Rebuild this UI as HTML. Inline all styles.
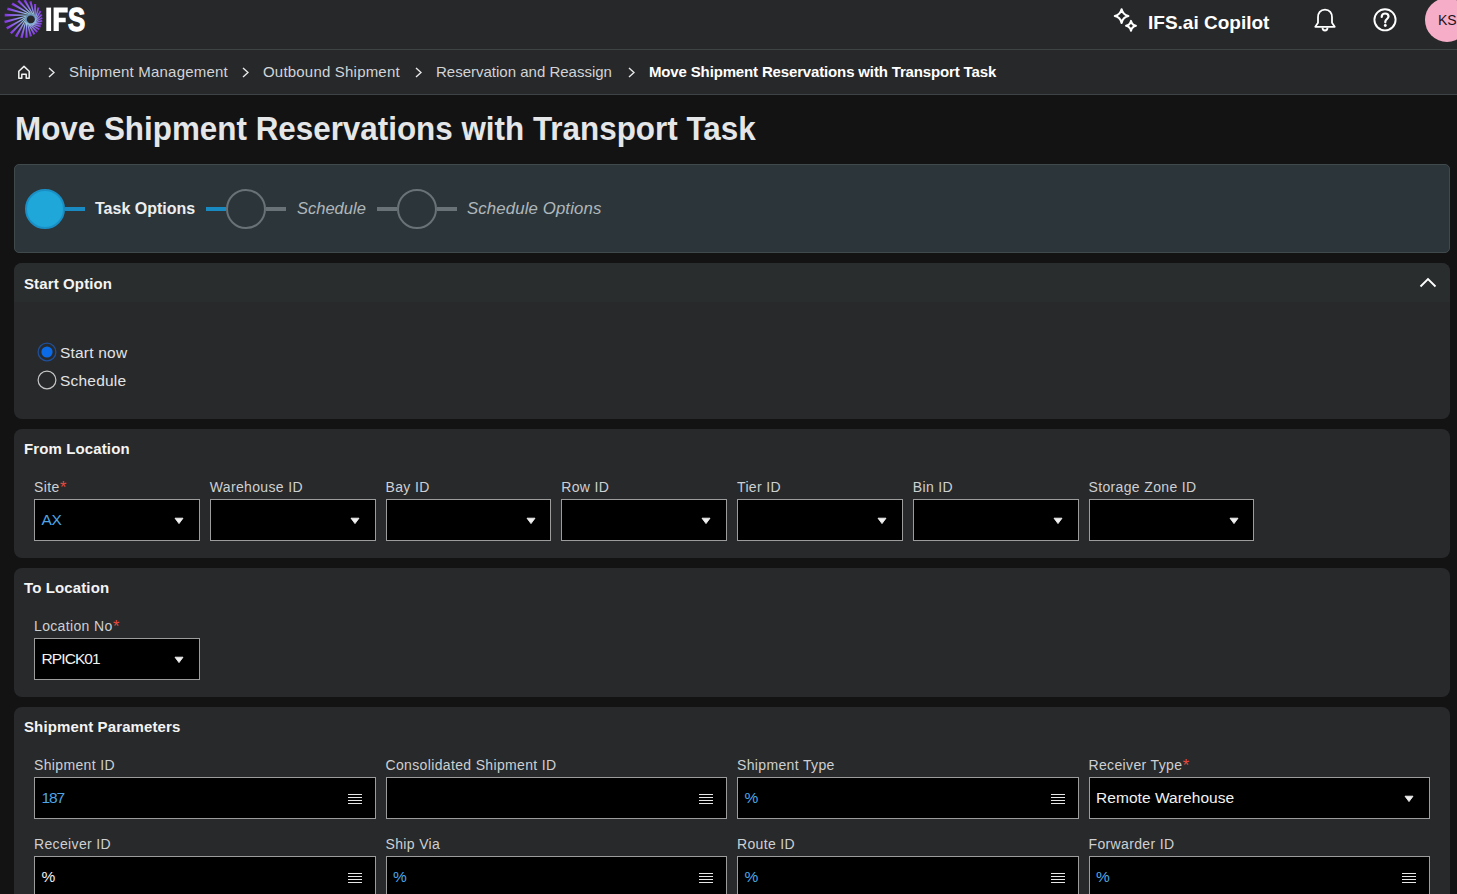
<!DOCTYPE html>
<html><head><meta charset="utf-8">
<style>
*{box-sizing:border-box;margin:0;padding:0}
html,body{width:1457px;height:894px;overflow:hidden;background:#131314;font-family:"Liberation Sans",sans-serif}
.a{position:absolute;white-space:nowrap}
#hdr{position:absolute;left:0;top:0;width:1457px;height:50px;background:#27282a;border-bottom:1px solid #3e4346}
#bc{position:absolute;left:0;top:50px;width:1457px;height:45px;background:#27282a;border-bottom:1px solid #3e4346}
.bct{font-size:15px;line-height:15px;color:#d2d4d6}
.chev{position:absolute;width:7px;height:11px}
#title{left:15px;top:112px;font-size:33px;line-height:33px;font-weight:700;color:#e4e6e8;transform:scaleX(0.951);transform-origin:0 0}
#step{position:absolute;left:14px;top:164px;width:1436px;height:89px;background:#2c363a;border:1px solid #404a4d;border-radius:5px}
.card{position:absolute;left:14px;width:1436px;background:#28292b;border-radius:8px}
.ct{font-size:15px;line-height:15px;font-weight:700;color:#f4f4f4;letter-spacing:0.12px}
.lbl{font-size:14px;line-height:14px;color:#cdd0d2;letter-spacing:0.35px}
.req{color:#e64a3f;font-size:16.5px;line-height:1px;position:relative;top:1px;margin-left:0.5px}
.inp{position:absolute;height:42px;background:#000;border:1px solid #9c9c9c}
.val{position:absolute;left:6.5px;top:11.5px;font-size:15.5px;line-height:15px;color:#4ea6e6;white-space:nowrap}
.val.w{color:#f2f2f2}
.dd{position:absolute;right:14.7px;top:17px}
.lst{position:absolute;right:13px;top:16px;width:14px;height:10px}
.lst i{display:block;height:1px;background:#e6e6e6;margin-bottom:2px}
</style></head><body>

<div id="hdr"></div>
<!-- logo -->
<svg class="a" style="left:0;top:0" width="46" height="40" viewBox="0 0 46 40" id="logo"><defs><linearGradient id="g0" gradientUnits="userSpaceOnUse" x1="35.1" y1="19.4" x2="35.1" y2="4.1"><stop offset="0" stop-color="#4a6fa8"/><stop offset="0.2" stop-color="#9fd2ec"/><stop offset="0.55" stop-color="#8c78e6"/><stop offset="1" stop-color="#8434e0"/></linearGradient><linearGradient id="g1" gradientUnits="userSpaceOnUse" x1="35.0" y1="20.5" x2="38.4" y2="7.5"><stop offset="0" stop-color="#4a6fa8"/><stop offset="0.2" stop-color="#9fd2ec"/><stop offset="0.55" stop-color="#8c78e6"/><stop offset="1" stop-color="#8434e0"/></linearGradient><linearGradient id="g2" gradientUnits="userSpaceOnUse" x1="34.5" y1="21.5" x2="40.6" y2="11.1"><stop offset="0" stop-color="#4a6fa8"/><stop offset="0.2" stop-color="#9fd2ec"/><stop offset="0.55" stop-color="#8c78e6"/><stop offset="1" stop-color="#8434e0"/></linearGradient><linearGradient id="g3" gradientUnits="userSpaceOnUse" x1="33.8" y1="22.4" x2="41.8" y2="14.5"><stop offset="0" stop-color="#4a6fa8"/><stop offset="0.2" stop-color="#9fd2ec"/><stop offset="0.55" stop-color="#8c78e6"/><stop offset="1" stop-color="#8434e0"/></linearGradient><linearGradient id="g4" gradientUnits="userSpaceOnUse" x1="33.0" y1="23.1" x2="42.3" y2="17.7"><stop offset="0" stop-color="#4a6fa8"/><stop offset="0.2" stop-color="#9fd2ec"/><stop offset="0.55" stop-color="#8c78e6"/><stop offset="1" stop-color="#8434e0"/></linearGradient><linearGradient id="g5" gradientUnits="userSpaceOnUse" x1="31.9" y1="23.6" x2="42.2" y2="20.8"><stop offset="0" stop-color="#4a6fa8"/><stop offset="0.2" stop-color="#9fd2ec"/><stop offset="0.55" stop-color="#8c78e6"/><stop offset="1" stop-color="#8434e0"/></linearGradient><linearGradient id="g6" gradientUnits="userSpaceOnUse" x1="30.8" y1="23.7" x2="41.7" y2="23.7"><stop offset="0" stop-color="#4a6fa8"/><stop offset="0.2" stop-color="#9fd2ec"/><stop offset="0.55" stop-color="#8c78e6"/><stop offset="1" stop-color="#8434e0"/></linearGradient><linearGradient id="g7" gradientUnits="userSpaceOnUse" x1="29.7" y1="23.6" x2="40.7" y2="26.5"><stop offset="0" stop-color="#4a6fa8"/><stop offset="0.2" stop-color="#9fd2ec"/><stop offset="0.55" stop-color="#8c78e6"/><stop offset="1" stop-color="#8434e0"/></linearGradient><linearGradient id="g8" gradientUnits="userSpaceOnUse" x1="28.7" y1="23.1" x2="39.3" y2="29.3"><stop offset="0" stop-color="#4a6fa8"/><stop offset="0.2" stop-color="#9fd2ec"/><stop offset="0.55" stop-color="#8c78e6"/><stop offset="1" stop-color="#8434e0"/></linearGradient><linearGradient id="g9" gradientUnits="userSpaceOnUse" x1="27.8" y1="22.4" x2="37.2" y2="31.9"><stop offset="0" stop-color="#4a6fa8"/><stop offset="0.2" stop-color="#9fd2ec"/><stop offset="0.55" stop-color="#8c78e6"/><stop offset="1" stop-color="#8434e0"/></linearGradient><linearGradient id="g10" gradientUnits="userSpaceOnUse" x1="27.1" y1="21.5" x2="34.5" y2="34.4"><stop offset="0" stop-color="#4a6fa8"/><stop offset="0.2" stop-color="#9fd2ec"/><stop offset="0.55" stop-color="#8c78e6"/><stop offset="1" stop-color="#8434e0"/></linearGradient><linearGradient id="g11" gradientUnits="userSpaceOnUse" x1="26.6" y1="20.5" x2="30.9" y2="36.4"><stop offset="0" stop-color="#4a6fa8"/><stop offset="0.2" stop-color="#9fd2ec"/><stop offset="0.55" stop-color="#8c78e6"/><stop offset="1" stop-color="#8434e0"/></linearGradient><linearGradient id="g12" gradientUnits="userSpaceOnUse" x1="26.5" y1="19.4" x2="26.5" y2="37.7"><stop offset="0" stop-color="#4a6fa8"/><stop offset="0.2" stop-color="#9fd2ec"/><stop offset="0.55" stop-color="#8c78e6"/><stop offset="1" stop-color="#8434e0"/></linearGradient><linearGradient id="g13" gradientUnits="userSpaceOnUse" x1="26.6" y1="18.3" x2="21.4" y2="37.9"><stop offset="0" stop-color="#4a6fa8"/><stop offset="0.2" stop-color="#9fd2ec"/><stop offset="0.55" stop-color="#8c78e6"/><stop offset="1" stop-color="#8434e0"/></linearGradient><linearGradient id="g14" gradientUnits="userSpaceOnUse" x1="27.1" y1="17.2" x2="16.0" y2="36.5"><stop offset="0" stop-color="#4a6fa8"/><stop offset="0.2" stop-color="#9fd2ec"/><stop offset="0.55" stop-color="#8c78e6"/><stop offset="1" stop-color="#8434e0"/></linearGradient><linearGradient id="g15" gradientUnits="userSpaceOnUse" x1="27.8" y1="16.4" x2="10.8" y2="33.3"><stop offset="0" stop-color="#4a6fa8"/><stop offset="0.2" stop-color="#9fd2ec"/><stop offset="0.55" stop-color="#8c78e6"/><stop offset="1" stop-color="#8434e0"/></linearGradient><linearGradient id="g16" gradientUnits="userSpaceOnUse" x1="28.6" y1="15.7" x2="6.7" y2="28.3"><stop offset="0" stop-color="#4a6fa8"/><stop offset="0.2" stop-color="#9fd2ec"/><stop offset="0.55" stop-color="#8c78e6"/><stop offset="1" stop-color="#8434e0"/></linearGradient><linearGradient id="g17" gradientUnits="userSpaceOnUse" x1="29.7" y1="15.2" x2="4.5" y2="22.0"><stop offset="0" stop-color="#4a6fa8"/><stop offset="0.2" stop-color="#9fd2ec"/><stop offset="0.55" stop-color="#8c78e6"/><stop offset="1" stop-color="#8434e0"/></linearGradient><linearGradient id="g18" gradientUnits="userSpaceOnUse" x1="30.8" y1="15.1" x2="4.7" y2="15.1"><stop offset="0" stop-color="#4a6fa8"/><stop offset="0.2" stop-color="#9fd2ec"/><stop offset="0.55" stop-color="#8c78e6"/><stop offset="1" stop-color="#8434e0"/></linearGradient><linearGradient id="g19" gradientUnits="userSpaceOnUse" x1="31.9" y1="15.2" x2="7.4" y2="8.7"><stop offset="0" stop-color="#4a6fa8"/><stop offset="0.2" stop-color="#9fd2ec"/><stop offset="0.55" stop-color="#8c78e6"/><stop offset="1" stop-color="#8434e0"/></linearGradient><linearGradient id="g20" gradientUnits="userSpaceOnUse" x1="33.0" y1="15.7" x2="12.1" y2="3.6"><stop offset="0" stop-color="#4a6fa8"/><stop offset="0.2" stop-color="#9fd2ec"/><stop offset="0.55" stop-color="#8c78e6"/><stop offset="1" stop-color="#8434e0"/></linearGradient><linearGradient id="g21" gradientUnits="userSpaceOnUse" x1="33.8" y1="16.4" x2="18.2" y2="0.7"><stop offset="0" stop-color="#4a6fa8"/><stop offset="0.2" stop-color="#9fd2ec"/><stop offset="0.55" stop-color="#8c78e6"/><stop offset="1" stop-color="#8434e0"/></linearGradient><linearGradient id="g22" gradientUnits="userSpaceOnUse" x1="34.5" y1="17.2" x2="24.6" y2="0.0"><stop offset="0" stop-color="#4a6fa8"/><stop offset="0.2" stop-color="#9fd2ec"/><stop offset="0.55" stop-color="#8c78e6"/><stop offset="1" stop-color="#8434e0"/></linearGradient><linearGradient id="g23" gradientUnits="userSpaceOnUse" x1="35.0" y1="18.3" x2="30.4" y2="1.4"><stop offset="0" stop-color="#4a6fa8"/><stop offset="0.2" stop-color="#9fd2ec"/><stop offset="0.55" stop-color="#8c78e6"/><stop offset="1" stop-color="#8434e0"/></linearGradient></defs><polygon fill="url(#g0)" points="35.3,20.4 36.2,4.1 34.0,4.1 34.9,20.4"/><polygon fill="url(#g1)" points="34.9,21.5 39.5,7.8 37.4,7.2 34.5,21.4"/><polygon fill="url(#g2)" points="34.2,22.5 41.5,11.6 39.7,10.6 33.8,22.3"/><polygon fill="url(#g3)" points="33.3,23.3 42.5,15.2 41.1,13.8 33.0,23.0"/><polygon fill="url(#g4)" points="32.2,23.8 42.8,18.6 41.8,16.9 32.0,23.4"/><polygon fill="url(#g5)" points="31.0,24.0 42.5,21.7 42.0,19.8 30.9,23.6"/><polygon fill="url(#g6)" points="29.8,23.9 41.7,24.7 41.7,22.7 29.8,23.5"/><polygon fill="url(#g7)" points="28.7,23.5 40.5,27.5 41.0,25.5 28.8,23.1"/><polygon fill="url(#g8)" points="27.7,22.8 38.8,30.2 39.8,28.4 27.9,22.4"/><polygon fill="url(#g9)" points="26.9,21.9 36.5,32.7 38.0,31.2 27.2,21.6"/><polygon fill="url(#g10)" points="26.4,20.8 33.5,34.9 35.4,33.8 26.8,20.6"/><polygon fill="url(#g11)" points="26.2,19.6 29.8,36.7 32.0,36.1 26.6,19.5"/><polygon fill="url(#g12)" points="26.3,18.4 25.3,37.7 27.7,37.7 26.7,18.4"/><polygon fill="url(#g13)" points="26.7,17.3 20.2,37.6 22.6,38.2 27.1,17.4"/><polygon fill="url(#g14)" points="27.4,16.3 14.8,35.9 17.1,37.2 27.8,16.5"/><polygon fill="url(#g15)" points="28.3,15.5 9.9,32.4 11.7,34.2 28.6,15.8"/><polygon fill="url(#g16)" points="29.4,15.0 6.1,27.2 7.4,29.5 29.6,15.4"/><polygon fill="url(#g17)" points="30.6,14.8 4.2,20.7 4.9,23.3 30.7,15.2"/><polygon fill="url(#g18)" points="31.8,14.9 4.7,13.7 4.7,16.5 31.8,15.3"/><polygon fill="url(#g19)" points="32.9,15.3 7.7,7.4 7.0,10.0 32.8,15.7"/><polygon fill="url(#g20)" points="33.9,16.0 12.8,2.5 11.4,4.8 33.7,16.4"/><polygon fill="url(#g21)" points="34.7,16.9 19.1,-0.2 17.3,1.6 34.4,17.2"/><polygon fill="url(#g22)" points="35.2,18.0 25.6,-0.6 23.5,0.7 34.8,18.2"/><polygon fill="url(#g23)" points="35.4,19.2 31.5,1.1 29.3,1.7 35.0,19.3"/></svg>
<svg class="a" style="left:40px;top:0" width="50" height="40" viewBox="40 0 50 40">
  <rect x="46.3" y="7.6" width="4.8" height="23.4" fill="#fff"/>
  <path d="M53.6 7.6 H67.7 V12.6 H58.8 V17.7 H65.7 V22.2 H58.8 V31 H53.6 Z" fill="#fff"/>
</svg>
<div class="a" style="left:67.6px;top:3px;font-size:33px;line-height:33px;font-weight:700;color:#fff;-webkit-text-stroke:1.3px #fff;transform:scaleX(0.78);transform-origin:0 0">S</div>

<!-- copilot -->
<svg class="a" style="left:1112px;top:7px" width="27" height="26" viewBox="0 0 27 26">
  <path d="M9.6 2.3 Q10.9 7.8 16.4 9.1 Q10.9 10.4 9.6 15.899999999999999 Q8.299999999999999 10.4 2.8 9.1 Q8.299999999999999 7.8 9.6 2.3Z" fill="none" stroke="#fff" stroke-width="2.1" stroke-linejoin="round"/>
  <path d="M19 13.9 Q19.95 17.85 23.9 18.8 Q19.95 19.75 19 23.700000000000003 Q18.05 19.75 14.1 18.8 Q18.05 17.85 19 13.9Z" fill="none" stroke="#fff" stroke-width="2.1" stroke-linejoin="round"/>
</svg>
<div class="a" style="left:1148px;top:13px;font-size:19px;line-height:20px;font-weight:700;color:#fff">IFS.ai Copilot</div>
<!-- bell -->
<svg class="a" style="left:1312px;top:7px" width="26" height="26" viewBox="0 0 26 26">
  <path d="M13 2.6 C8.3 2.6 6 6 6 10.2 L6 15.8 L3.3 19.8 L22.7 19.8 L20 15.8 L20 10.2 C20 6 17.7 2.6 13 2.6Z" fill="none" stroke="#fff" stroke-width="1.8" stroke-linejoin="round"/>
  <path d="M10.5 20.5 C10.5 22.5 11.5 23.5 13 23.5 C14.5 23.5 15.5 22.5 15.5 20.5" fill="none" stroke="#fff" stroke-width="1.8"/>
</svg>
<!-- help -->
<svg class="a" style="left:1372px;top:7px" width="26" height="26" viewBox="0 0 26 26">
  <circle cx="13" cy="12.8" r="10.6" fill="none" stroke="#fff" stroke-width="1.9"/>
  <path d="M9.7 9.9 C9.7 7.7 11.3 6.5 13.1 6.5 C15 6.5 16.5 7.8 16.5 9.6 C16.5 11.7 13.3 12.3 13.3 14.7 L13.3 15.3" fill="none" stroke="#fff" stroke-width="2.2" stroke-linecap="round"/>
  <circle cx="13.3" cy="18.5" r="1.45" fill="#fff"/>
</svg>
<!-- avatar -->
<div class="a" style="left:1425px;top:-2px;width:44px;height:44px;border-radius:50%;background:#f6aec8"></div>
<div class="a" style="left:1438px;top:13px;font-size:14px;line-height:14px;color:#1a1422">KS</div>

<div id="bc"></div>
<svg class="a" style="left:16px;top:64px" width="16" height="16" viewBox="0 0 16 16">
  <path d="M2.8 14.2 L2.8 7.2 L8 2.4 L13.2 7.2 L13.2 14.2 L10.2 14.2 L10.2 10.2 L5.8 10.2 L5.8 14.2 Z" fill="none" stroke="#f2f2f2" stroke-width="1.5" stroke-linejoin="round"/>
</svg>
<svg class="chev" style="left:48px;top:67px" viewBox="0 0 7 11"><path d="M1 1 L6 5.5 L1 10" fill="none" stroke="#e8e8e8" stroke-width="1.4"/></svg>
<div class="a bct" style="left:69px;top:64px;letter-spacing:0.2px">Shipment Management</div>
<svg class="chev" style="left:242px;top:67px" viewBox="0 0 7 11"><path d="M1 1 L6 5.5 L1 10" fill="none" stroke="#e8e8e8" stroke-width="1.4"/></svg>
<div class="a bct" style="left:263px;top:64px;letter-spacing:0.2px">Outbound Shipment</div>
<svg class="chev" style="left:415px;top:67px" viewBox="0 0 7 11"><path d="M1 1 L6 5.5 L1 10" fill="none" stroke="#e8e8e8" stroke-width="1.4"/></svg>
<div class="a bct" style="left:436px;top:64px">Reservation and Reassign</div>
<svg class="chev" style="left:628px;top:67px" viewBox="0 0 7 11"><path d="M1 1 L6 5.5 L1 10" fill="none" stroke="#e8e8e8" stroke-width="1.4"/></svg>
<div class="a bct" style="left:649px;top:64px;font-weight:700;color:#fff;letter-spacing:-0.15px">Move Shipment Reservations with Transport Task</div>

<div class="a" id="title">Move Shipment Reservations with Transport Task</div>

<!-- stepper -->
<div id="step"></div>
<div class="a" style="left:25px;top:189px;width:40px;height:40px;border-radius:50%;background:#1fa7d9;border:2px solid #1a8fc6"></div>
<div class="a" style="left:65px;top:207px;width:20px;height:4px;background:#1a8ac2"></div>
<div class="a" style="left:95px;top:201px;font-size:16px;line-height:16px;font-weight:700;color:#eceeef">Task Options</div>
<div class="a" style="left:206px;top:207px;width:20px;height:4px;background:#1a8ac2"></div>
<div class="a" style="left:226px;top:189px;width:40px;height:40px;border-radius:50%;border:2px solid #687277"></div>
<div class="a" style="left:266px;top:207px;width:20px;height:4px;background:#687277"></div>
<div class="a" style="left:297px;top:200px;font-size:16.5px;line-height:16px;font-style:italic;color:#b0b7bb">Schedule</div>
<div class="a" style="left:377px;top:207px;width:20px;height:4px;background:#687277"></div>
<div class="a" style="left:397px;top:189px;width:40px;height:40px;border-radius:50%;border:2px solid #687277"></div>
<div class="a" style="left:437px;top:207px;width:20px;height:4px;background:#687277"></div>
<div class="a" style="left:467px;top:201px;font-size:16.8px;line-height:16px;font-style:italic;color:#b0b7bb;letter-spacing:0.12px">Schedule Options</div>

<!-- Start Option card -->
<div class="card" style="top:263px;height:156px;overflow:hidden">
  <div style="position:absolute;left:0;top:0;width:100%;height:39px;background:#2a2d2e"></div>
</div>
<div class="a ct" style="left:24px;top:276px">Start Option</div>
<svg class="a" style="left:1419px;top:276px" width="18" height="12" viewBox="0 0 18 12"><path d="M1.5 10.5 L9 3 L16.5 10.5" fill="none" stroke="#fff" stroke-width="1.8"/></svg>
<svg class="a" style="left:36px;top:341px" width="22" height="22" viewBox="0 0 22 22">
  <circle cx="11" cy="11" r="8.9" fill="none" stroke="#1f4f98" stroke-width="1.3"/>
  <circle cx="11" cy="11" r="5.6" fill="#0b6be6"/>
</svg>
<div class="a" style="left:60px;top:345px;font-size:15.5px;line-height:15px;color:#e2e4e6;letter-spacing:0.2px">Start now</div>
<svg class="a" style="left:36px;top:369px" width="22" height="22" viewBox="0 0 22 22">
  <circle cx="11" cy="11" r="8.9" fill="none" stroke="#c6c6c6" stroke-width="1.2"/>
</svg>
<div class="a" style="left:60px;top:373px;font-size:15.5px;line-height:15px;color:#e2e4e6;letter-spacing:0.2px">Schedule</div>

<!-- From Location -->
<div class="card" style="top:429px;height:129px"></div>
<div class="a ct" style="left:24px;top:441px">From Location</div>
<!-- To Location -->
<div class="card" style="top:568px;height:129px"></div>
<div class="a ct" style="left:24px;top:580px">To Location</div>

<!-- Shipment Parameters -->
<div class="card" style="top:707px;height:200px"></div>
<div class="a ct" style="left:24px;top:719px">Shipment Parameters</div>

<!-- from fields -->
<div class="a lbl" style="left:34.00px;top:480px">Site<span class="req">*</span></div>
<div class="inp" style="left:34.00px;top:499px;width:165.75px"><div class="val" style="letter-spacing:-0.3px">AX</div><svg class="dd" width="10" height="8" viewBox="0 0 10 8"><path d="M1 1.2 H9 L5 6.6Z" fill="#f0f0f0" stroke="#f0f0f0" stroke-width="0.9" stroke-linejoin="round"/></svg></div>
<div class="a lbl" style="left:209.75px;top:480px">Warehouse ID</div>
<div class="inp" style="left:209.75px;top:499px;width:165.75px"><svg class="dd" width="10" height="8" viewBox="0 0 10 8"><path d="M1 1.2 H9 L5 6.6Z" fill="#f0f0f0" stroke="#f0f0f0" stroke-width="0.9" stroke-linejoin="round"/></svg></div>
<div class="a lbl" style="left:385.50px;top:480px">Bay ID</div>
<div class="inp" style="left:385.50px;top:499px;width:165.75px"><svg class="dd" width="10" height="8" viewBox="0 0 10 8"><path d="M1 1.2 H9 L5 6.6Z" fill="#f0f0f0" stroke="#f0f0f0" stroke-width="0.9" stroke-linejoin="round"/></svg></div>
<div class="a lbl" style="left:561.25px;top:480px">Row ID</div>
<div class="inp" style="left:561.25px;top:499px;width:165.75px"><svg class="dd" width="10" height="8" viewBox="0 0 10 8"><path d="M1 1.2 H9 L5 6.6Z" fill="#f0f0f0" stroke="#f0f0f0" stroke-width="0.9" stroke-linejoin="round"/></svg></div>
<div class="a lbl" style="left:737.00px;top:480px">Tier ID</div>
<div class="inp" style="left:737.00px;top:499px;width:165.75px"><svg class="dd" width="10" height="8" viewBox="0 0 10 8"><path d="M1 1.2 H9 L5 6.6Z" fill="#f0f0f0" stroke="#f0f0f0" stroke-width="0.9" stroke-linejoin="round"/></svg></div>
<div class="a lbl" style="left:912.75px;top:480px">Bin ID</div>
<div class="inp" style="left:912.75px;top:499px;width:165.75px"><svg class="dd" width="10" height="8" viewBox="0 0 10 8"><path d="M1 1.2 H9 L5 6.6Z" fill="#f0f0f0" stroke="#f0f0f0" stroke-width="0.9" stroke-linejoin="round"/></svg></div>
<div class="a lbl" style="left:1088.50px;top:480px">Storage Zone ID</div>
<div class="inp" style="left:1088.50px;top:499px;width:165.75px"><svg class="dd" width="10" height="8" viewBox="0 0 10 8"><path d="M1 1.2 H9 L5 6.6Z" fill="#f0f0f0" stroke="#f0f0f0" stroke-width="0.9" stroke-linejoin="round"/></svg></div>
<!-- to fields -->
<div class="a lbl" style="left:34.00px;top:619px">Location No<span class="req">*</span></div>
<div class="inp" style="left:34.00px;top:638px;width:165.75px"><div class="val w" style="letter-spacing:-0.9px">RPICK01</div><svg class="dd" width="10" height="8" viewBox="0 0 10 8"><path d="M1 1.2 H9 L5 6.6Z" fill="#f0f0f0" stroke="#f0f0f0" stroke-width="0.9" stroke-linejoin="round"/></svg></div>
<!-- shipment fields -->
<div class="a lbl" style="left:34.00px;top:758px">Shipment ID</div>
<div class="inp" style="left:34.00px;top:777px;width:341.50px"><div class="val" style="letter-spacing:-1.1px">187</div><div class="lst"><i></i><i></i><i></i><i></i></div></div>
<div class="a lbl" style="left:385.50px;top:758px">Consolidated Shipment ID</div>
<div class="inp" style="left:385.50px;top:777px;width:341.50px"><div class="lst"><i></i><i></i><i></i><i></i></div></div>
<div class="a lbl" style="left:737.00px;top:758px">Shipment Type</div>
<div class="inp" style="left:737.00px;top:777px;width:341.50px"><div class="val">%</div><div class="lst"><i></i><i></i><i></i><i></i></div></div>
<div class="a lbl" style="left:1088.50px;top:758px">Receiver Type<span class="req">*</span></div>
<div class="inp" style="left:1088.50px;top:777px;width:341.50px"><div class="val w" style="letter-spacing:0.06px">Remote Warehouse</div><svg class="dd" width="10" height="8" viewBox="0 0 10 8"><path d="M1 1.2 H9 L5 6.6Z" fill="#f0f0f0" stroke="#f0f0f0" stroke-width="0.9" stroke-linejoin="round"/></svg></div>
<div class="a lbl" style="left:34.00px;top:837px">Receiver ID</div>
<div class="inp" style="left:34.00px;top:856px;width:341.50px"><div class="val w">%</div><div class="lst"><i></i><i></i><i></i><i></i></div></div>
<div class="a lbl" style="left:385.50px;top:837px">Ship Via</div>
<div class="inp" style="left:385.50px;top:856px;width:341.50px"><div class="val">%</div><div class="lst"><i></i><i></i><i></i><i></i></div></div>
<div class="a lbl" style="left:737.00px;top:837px">Route ID</div>
<div class="inp" style="left:737.00px;top:856px;width:341.50px"><div class="val">%</div><div class="lst"><i></i><i></i><i></i><i></i></div></div>
<div class="a lbl" style="left:1088.50px;top:837px">Forwarder ID</div>
<div class="inp" style="left:1088.50px;top:856px;width:341.50px"><div class="val">%</div><div class="lst"><i></i><i></i><i></i><i></i></div></div>


</body></html>
